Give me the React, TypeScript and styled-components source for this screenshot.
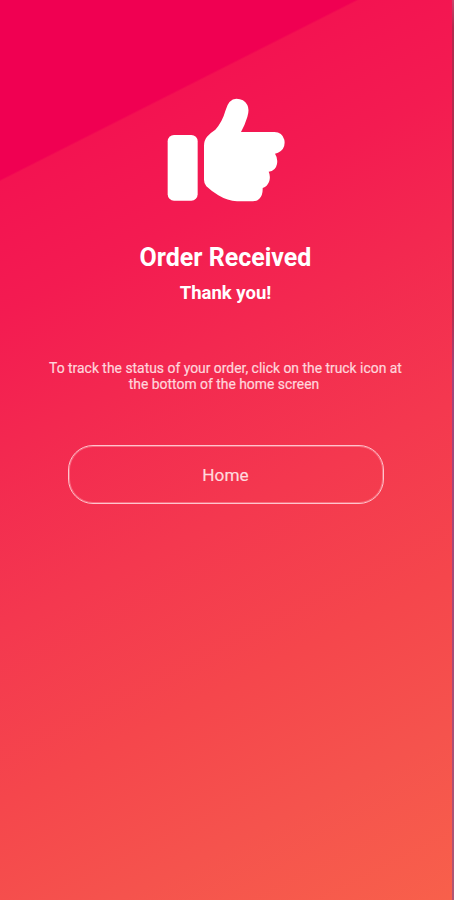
import React from "react";
import styled, { createGlobalStyle } from "styled-components";

const GlobalStyle = createGlobalStyle`
  *, *::before, *::after { box-sizing: border-box; }
  body { margin: 0; font-family: Roboto, "Liberation Sans", sans-serif; }
`;

const Frame = styled.div`
  display: grid;
  grid-template-columns: 1fr 2px;
  height: 900px;
  overflow: hidden;
`;

const Screen = styled.main`
  display: flex;
  flex-direction: column;
  align-items: center;
  padding: 97px 1px 0 0;
  color: #fff;
  text-align: center;
  background: linear-gradient(
    153.2deg,
    #f00052 0%,
    #f00052 15.9%,
    #f31351 16.1%,
    #f31b51 28%,
    #f32850 40%,
    #f4384f 56%,
    #f5464c 71%,
    #f5534d 85%,
    #f8604b 100%
  );
`;

const Edge = styled.div`
  background: linear-gradient(#c9436b 0%, #b5294f 3%, #b52f50 35%, #a3447c 41%, #a94a78 70%, #b35673 100%);
`;

const ThumbIcon = styled.svg`
  display: block;
  width: 120px;
  height: 106px;
  fill: #fff;
`;

const Title = styled.h1`
  margin: 39px 0 0;
  font-size: 25px;
  line-height: 32px;
  font-weight: 700;
  white-space: nowrap;
`;

const Subtitle = styled.h2`
  margin: 7px 0 0;
  font-size: 18.5px;
  line-height: 24px;
  font-weight: 700;
`;

const Message = styled.p`
  width: 380px;
  margin: 55px 0 0;
  font-size: 13.9px;
  line-height: 16px;
  color: #ffd5dc;
  -webkit-text-stroke: 0.2px #ffd5dc;
`;

const SecondLine = styled.span`
  display: block;
  margin-left: -3px;
`;

const HomeButton = styled.button`
  width: 316px;
  height: 59px;
  margin: 53px 0 0;
  padding: 0;
  border: 1px solid #ffc4cc;
  border-radius: 25px;
  box-shadow: inset 0 0 0 1px rgba(255, 190, 200, 0.4);
  background: transparent;
  color: #ffd9de;
  font-family: inherit;
  font-size: 17.2px;
  -webkit-text-stroke: 0.2px #ffd9de;
`;

export default function App() {
  return (
    <>
      <GlobalStyle />
      <Frame>
        <Screen>
          <ThumbIcon viewBox="47 36 360 318" aria-hidden="true">
            <rect x="52" y="150" width="90" height="197" rx="19" />
            <path d="M161 182Q161 166 170 155Q178 145 195 134Q216 111 226 75Q235 42 258 41Q281 41 291 60Q298 74 291 96Q284 119 272 141H372Q396 142 402 164Q407 192 383 203L374 206Q383 219 380 237Q376 258 355 260Q361 272 357 288Q352 304 337 309Q338 330 327 341Q321 348 308 349H260Q232 348 204 331Q184 319 168 304Q161 296 161 284Z" />
          </ThumbIcon>
          <Title>Order Received</Title>
          <Subtitle>Thank you!</Subtitle>
          <Message>
            To track the status of your order, click on the truck icon at{" "}
            <SecondLine>the bottom of the home screen</SecondLine>
          </Message>
          <HomeButton type="button">Home</HomeButton>
        </Screen>
        <Edge />
      </Frame>
    </>
  );
}
